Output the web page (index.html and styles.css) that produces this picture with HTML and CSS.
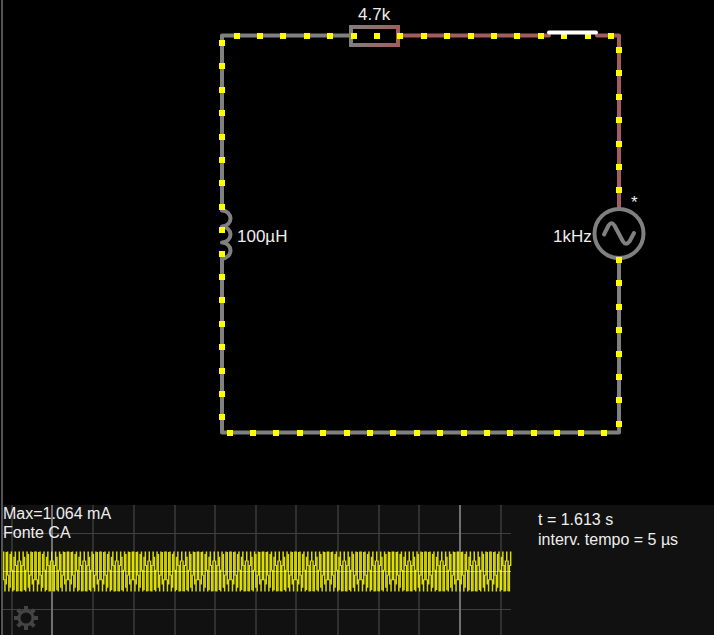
FILE: index.html
```html
<!DOCTYPE html>
<html lang="pt">
<head>
<meta charset="utf-8">
<title>Simulador de circuitos</title>
<link rel="stylesheet" href="styles.css">
</head>
<body>
<main class="simulator">
  <section class="circuit" aria-label="Circuito">
    <svg class="drawing" viewBox="0 0 711 505" role="img" aria-label="Circuito RL com fonte CA">
      <defs>
        <linearGradient id="drop" gradientUnits="userSpaceOnUse" x1="347" y1="0" x2="396" y2="0">
          <stop offset="0" stop-color="#808080"/>
          <stop offset="1" stop-color="#a35d5d"/>
        </linearGradient>
      </defs>
      <g class="wire">
        <path d="M347 35.500H219V210M219 258V432.500H616V258"/>
        <path class="live" d="M396 35.500H546M594 35.500H616V209"/>
        <path class="coil" d="M219 210.500a8.500 8 0 0 1 0 16a8.500 8 0 0 1 0 16a8.500 8 0 0 1 0 16"/>
        <circle cx="616" cy="233.500" r="24.500"/>
        <path d="M601 234.500L605.500 225.500Q608.500 221 611.500 225.500L620 241.500Q623 246 626.500 241.500L631 233"/>
      </g>
      <rect class="resistor" x="348" y="27" width="47" height="18"/>
      <g id="charges" class="charge"></g>
      <path class="switch" d="M546 32.500H593"/>
      <g class="label">
        <text x="355" y="20">4.7k</text>
        <text x="234" y="242">100µH</text>
        <text x="550" y="242">1kHz</text>
        <text x="628" y="208">*</text>
      </g>
    </svg>
  </section>
  <section class="bottom">
    <div class="scope">
      <svg class="plot" viewBox="0 0 509 130" aria-hidden="true">
        <g class="grid">
          <path d="M9 0V130M90 0V130M131 0V130M172 0V130M212 0V130M253 0V130M293 0V130M335 0V130M376 0V130M416 0V130M498 0V130"/>
          <path class="across" d="M0 28.500H508M0 104.500H508"/>
          <path class="major" d="M49 0V130M457 0V130"/>
        </g>
        <g id="wave" class="wave"></g>
        <path class="zero" d="M0 66.500H508"/>
      </svg>
      <p class="reading">Max=1.064 mA<br>Fonte CA</p>
      <button class="settings" type="button" aria-label="Configurar">
        <svg viewBox="-12 -12 24 24" class="gear" aria-hidden="true">
          <circle r="7"/>
          <path d="M0 -7V-12M0 7V12M-7 0H-12M7 0H12M-5 -5L-8.300 -8.300M5 -5L8.300 -8.300M-5 5L-8.300 8.300M5 5L8.300 8.300"/>
        </svg>
      </button>
    </div>
    <p class="status">t = 1.613 s<br>interv. tempo = 5 µs</p>
  </section>
</main>
<script src="scope.js"></script>
</body>
</html>
```
FILE: styles.css
```css
body {
  margin: 0;
  background: #000;
  color: #eee;
  font-family: "Liberation Sans", Arial, sans-serif;
  font-size: 16px;
}
p { margin: 0; }
.simulator {
  box-sizing: border-box;
  min-height: 100vh;
  margin-left: 1px;
  display: flex;
  flex-direction: column;
  border-left: 2px solid #505456;
}
.circuit { flex: 1; }
.drawing { display: block; width: 100%; }
.wire { fill: none; stroke: #808080; stroke-width: 4; stroke-linecap: round; stroke-linejoin: round; }
.live { stroke: #a35d5d; }
.resistor { fill: none; stroke: url(#drop); stroke-width: 4; }
.charge { fill: #ff0; }
.switch { stroke: #fff; stroke-width: 4; stroke-linecap: round; }
.label { fill: #eee; font-size: 17px; }
.bottom {
  display: grid;
  grid-template-columns: 509fr 202fr;
  background: #111;
}
.scope { position: relative; }
.plot { display: block; width: 100%; }
.grid { fill: none; stroke: #303030; stroke-width: 2; }
.across { stroke: #404040; stroke-width: 1; }
.major { stroke: #707070; }
.wave { fill: none; stroke: #ff0; stroke-width: 1.5; stroke-opacity: 0.85; }
.zero { stroke: #fff; stroke-opacity: 0.5; }
.reading { position: absolute; left: 0; top: -1px; line-height: 19px; }
.settings {
  position: absolute;
  left: 11px;
  bottom: 5px;
  width: 24px;
  height: 24px;
  padding: 0;
  border: 0;
  background: none;
}
.gear { display: block; fill: none; stroke: #444; stroke-width: 4; }
.gear circle { stroke-width: 3; }
.status { padding: 5px 0 0 26px; line-height: 20px; }
```
FILE: scope.js
```js
const NS = "http://www.w3.org/2000/svg";

const SPACING = 23.4;
const charges = document.getElementById("charges");
function addCharges(x, y, dx, dy, count) {
  for (let i = 0; i < count; i++) {
    const dot = document.createElementNS(NS, "rect");
    dot.setAttribute("x", Math.round(x + dx * SPACING * i) - 3);
    dot.setAttribute("y", Math.round(y + dy * SPACING * i) - 3);
    dot.setAttribute("width", 6);
    dot.setAttribute("height", 6);
    charges.append(dot);
  }
}
addCharges(233.5, 36, 1, 0, 17);
addCharges(219, 43, 0, 1, 17);
addCharges(226.5, 433, 1, 0, 17);
addCharges(616, 50, 0, 1, 7);
addCharges(616, 260, 0, 1, 8);

// Each column spans the lowest and highest value seen during 0.32 of a cycle.
const STEP = 0.32;
const COLUMN = 1.3;
const MIDDLE = 66.5;
const HEIGHT = 19.5;
const wave = document.getElementById("wave");
for (let k = 0; k < 391; k++) {
  let low = 1;
  let high = -1;
  for (let s = 0; s <= 64; s++) {
    const v = Math.sin(2 * Math.PI * (STEP * (k + s / 64) + 0.25));
    low = Math.min(low, v);
    high = Math.max(high, v);
  }
  const x = (k + 0.5) * COLUMN;
  const line = document.createElementNS(NS, "path");
  line.setAttribute("d", `M${x} ${MIDDLE - HEIGHT * high - 0.5}V${MIDDLE - HEIGHT * low + 0.5}`);
  wave.append(line);
}
```
